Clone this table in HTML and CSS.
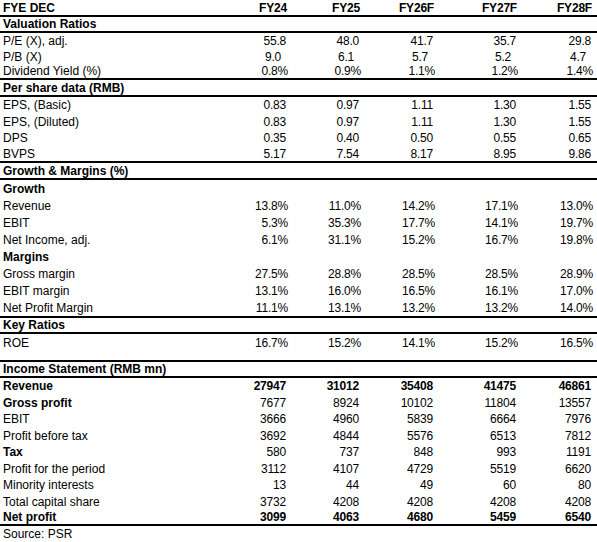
FILE: index.html
```html
<!DOCTYPE html>
<html lang="en">
<head>
    <meta charset="UTF-8">
    <title>Financial Summary</title>
    <link rel="stylesheet" href="styles.css">
</head>
<body>
    <div class="sheet">
        <div class="row head h17 rule">
            <div class="label">FYE DEC</div>
            <div class="num">FY24</div><div class="num">FY25</div><div class="num">FY26F</div><div class="num">FY27F</div><div class="num">FY28F</div>
        </div>

        <div class="row section h16 rule"><div class="label">Valuation Ratios</div></div>
        <div class="row h16">
            <div class="label">P/E (X), adj.</div>
            <div class="num">55.8</div><div class="num">48.0</div><div class="num">41.7</div><div class="num">35.7</div><div class="num">29.8</div>
        </div>
        <div class="row h15 indent">
            <div class="label">P/B (X)</div>
            <div class="num">9.0</div><div class="num">6.1</div><div class="num">5.7</div><div class="num">5.2</div><div class="num">4.7</div>
        </div>
        <div class="row h16 rule pct">
            <div class="label">Dividend Yield (%)</div>
            <div class="num">0.8%</div><div class="num">0.9%</div><div class="num">1.1%</div><div class="num">1.2%</div><div class="num">1.4%</div>
        </div>

        <div class="row section h17 rule"><div class="label">Per share data (RMB)</div></div>
        <div class="row h16">
            <div class="label">EPS, (Basic)</div>
            <div class="num">0.83</div><div class="num">0.97</div><div class="num">1.11</div><div class="num">1.30</div><div class="num">1.55</div>
        </div>
        <div class="row h17">
            <div class="label">EPS, (Diluted)</div>
            <div class="num">0.83</div><div class="num">0.97</div><div class="num">1.11</div><div class="num">1.30</div><div class="num">1.55</div>
        </div>
        <div class="row h16">
            <div class="label">DPS</div>
            <div class="num">0.35</div><div class="num">0.40</div><div class="num">0.50</div><div class="num">0.55</div><div class="num">0.65</div>
        </div>
        <div class="row h17 rule">
            <div class="label">BVPS</div>
            <div class="num">5.17</div><div class="num">7.54</div><div class="num">8.17</div><div class="num">8.95</div><div class="num">9.86</div>
        </div>

        <div class="row section h17 rule"><div class="label">Growth &amp; Margins (%)</div></div>
        <div class="row section h17"><div class="label">Growth</div></div>
        <div class="row h17 pct">
            <div class="label">Revenue</div>
            <div class="num">13.8%</div><div class="num">11.0%</div><div class="num">14.2%</div><div class="num">17.1%</div><div class="num">13.0%</div>
        </div>
        <div class="row h17 pct">
            <div class="label">EBIT</div>
            <div class="num">5.3%</div><div class="num">35.3%</div><div class="num">17.7%</div><div class="num">14.1%</div><div class="num">19.7%</div>
        </div>
        <div class="row h17 pct">
            <div class="label">Net Income, adj.</div>
            <div class="num">6.1%</div><div class="num">31.1%</div><div class="num">15.2%</div><div class="num">16.7%</div><div class="num">19.8%</div>
        </div>
        <div class="row section h17"><div class="label">Margins</div></div>
        <div class="row h17 pct">
            <div class="label">Gross margin</div>
            <div class="num">27.5%</div><div class="num">28.8%</div><div class="num">28.5%</div><div class="num">28.5%</div><div class="num">28.9%</div>
        </div>
        <div class="row h18 pct">
            <div class="label">EBIT margin</div>
            <div class="num">13.1%</div><div class="num">16.0%</div><div class="num">16.5%</div><div class="num">16.1%</div><div class="num">17.0%</div>
        </div>
        <div class="row h18 rule pct">
            <div class="label">Net Profit Margin</div>
            <div class="num">11.1%</div><div class="num">13.1%</div><div class="num">13.2%</div><div class="num">13.2%</div><div class="num">14.0%</div>
        </div>

        <div class="row section h16 rule"><div class="label">Key Ratios</div></div>
        <div class="row h17 pct">
            <div class="label">ROE</div>
            <div class="num">16.7%</div><div class="num">15.2%</div><div class="num">14.1%</div><div class="num">15.2%</div><div class="num">16.5%</div>
        </div>
        <div class="row gap rule"></div>

        <div class="row section h16 rule"><div class="label">Income Statement (RMB mn)</div></div>
        <div class="row h16 bold">
            <div class="label">Revenue</div>
            <div class="num">27947</div><div class="num">31012</div><div class="num">35408</div><div class="num">41475</div><div class="num">46861</div>
        </div>
        <div class="row h17">
            <div class="label strong">Gross profit</div>
            <div class="num">7677</div><div class="num">8924</div><div class="num">10102</div><div class="num">11804</div><div class="num">13557</div>
        </div>
        <div class="row h16">
            <div class="label">EBIT</div>
            <div class="num">3666</div><div class="num">4960</div><div class="num">5839</div><div class="num">6664</div><div class="num">7976</div>
        </div>
        <div class="row h17">
            <div class="label">Profit before tax</div>
            <div class="num">3692</div><div class="num">4844</div><div class="num">5576</div><div class="num">6513</div><div class="num">7812</div>
        </div>
        <div class="row h16">
            <div class="label strong">Tax</div>
            <div class="num">580</div><div class="num">737</div><div class="num">848</div><div class="num">993</div><div class="num">1191</div>
        </div>
        <div class="row h17">
            <div class="label">Profit for the period</div>
            <div class="num">3112</div><div class="num">4107</div><div class="num">4729</div><div class="num">5519</div><div class="num">6620</div>
        </div>
        <div class="row h16">
            <div class="label">Minority interests</div>
            <div class="num">13</div><div class="num">44</div><div class="num">49</div><div class="num">60</div><div class="num">80</div>
        </div>
        <div class="row h17">
            <div class="label">Total capital share</div>
            <div class="num">3732</div><div class="num">4208</div><div class="num">4208</div><div class="num">4208</div><div class="num">4208</div>
        </div>
        <div class="row h16 bold rule">
            <div class="label">Net profit</div>
            <div class="num">3099</div><div class="num">4063</div><div class="num">4680</div><div class="num">5459</div><div class="num">6540</div>
        </div>

        <div class="source">Source: PSR</div>
    </div>
</body>
</html>
```

FILE: styles.css
```css
body {
    margin: 0;
    background: #fff;
    color: #000;
    font-family: "Liberation Sans", Arial, sans-serif;
    font-size: 12px;
}
.sheet {
    width: 597px;
}
.row {
    display: grid;
    grid-template-columns: 230px 58px 73px 74px 83px 75px;
    align-items: center;
    box-sizing: border-box;
    line-height: 14px;
}
.h15 { height: 15px; }
.h16 { height: 16px; }
.h17 { height: 17px; }
.h18 { height: 18px; }
.gap { height: 11px; }
.rule {
    border-bottom: 2px solid #000;
}
.label {
    padding-left: 3px;
    white-space: nowrap;
}
.num {
    text-align: right;
    padding-right: 2px;
    letter-spacing: -0.2px;
}
.pct .num {
    padding-right: 0;
}
.indent .num {
    padding-right: 7px;
}
.head,
.section,
.bold,
.strong {
    font-weight: bold;
}
.head .num {
    padding-right: 1px;
}
.source {
    height: 16px;
    line-height: 16px;
    padding-left: 3px;
}
```
